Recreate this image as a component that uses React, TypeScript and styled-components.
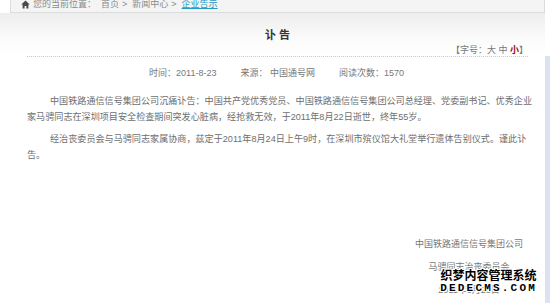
import styled, { createGlobalStyle } from 'styled-components';

const GlobalStyle = createGlobalStyle`
  html, body {
    margin: 0;
    padding: 0;
    background: #fff;
  }
  body {
    font-family: 'Liberation Sans', 'Noto Sans CJK SC', sans-serif;
  }
`;

const BODY_PARAGRAPHS = [
  [
    '中国铁路通信信号集团公司沉痛讣告：中国共产党优秀党员、中国铁路通信信号集团公司总经理、党委副书记、优秀企业',
    '家马骋同志在深圳项目安全检查期间突发心脏病，经抢救无效，于2011年8月22日逝世，终年55岁。',
  ],
  [
    '经治丧委员会与马骋同志家属协商，兹定于2011年8月24日上午9时，在深圳市殡仪馆大礼堂举行遗体告别仪式。谨此讣',
    '告。',
  ],
];

const SIGNATURE = ['中国铁路通信信号集团公司', '马骋同志治丧委员会', '2011年8月23日'];

const HomeIcon = () => (
  <svg width="9" height="9" viewBox="0 0 10 10">
    <path d="M5 0.5 L0.3 5 L1.8 5 L1.8 9.5 L4 9.5 L4 6.8 L6 6.8 L6 9.5 L8.2 9.5 L8.2 5 L9.7 5 Z" fill="#4a4a4a" />
  </svg>
);

const App = () => {
  return (
    <>
      <GlobalStyle />
      <Page>
        <Main>
          <Crumbs>
            <HomeIcon />
            <span>您的当前位置：</span>
            <CrumbLink>首页</CrumbLink>
            <Sep>&gt;</Sep>
            <CrumbLink>新闻中心</CrumbLink>
            <Sep>&gt;</Sep>
            <CrumbLink current>企业告示</CrumbLink>
          </Crumbs>

          <Header>
            <HeaderInner>
              <Title>讣 告</Title>
              <FontSize>
                【字号：大 中 <b>小</b>】
              </FontSize>
            </HeaderInner>
          </Header>

          <Meta>
            <span>时间：2011-8-23</span>
            <span>来源： 中国通号网</span>
            <span>阅读次数：1570</span>
          </Meta>

          <Article>
            {BODY_PARAGRAPHS.map((lines, i) => (
              <Para key={i}>
                {lines.map((line, j) => (
                  <Line key={j} first={j === 0}>
                    {line}
                  </Line>
                ))}
              </Para>
            ))}
          </Article>

          <Signature>
            {SIGNATURE.map((line) => (
              <div key={line}>{line}</div>
            ))}
          </Signature>

          <Watermark>
            <div className="cn">织梦内容管理系统</div>
            <div className="en">DEDECMS.COM</div>
          </Watermark>
        </Main>
        <Side />
      </Page>
    </>
  );
};

export default App;

const Page = styled.div`
  display: flex;
  width: 550px;
  height: 303px;
  overflow: hidden;
`;

const Main = styled.div`
  position: relative;
  width: 545px;
  flex-shrink: 0;
`;

const Side = styled.div`
  flex: 1;
  background: linear-gradient(to bottom, #fff 56px, #dbe3f3 56px);
`;

const Crumbs = styled.div`
  display: flex;
  align-items: center;
  gap: 3px;
  margin-left: 10px;
  height: 12px;
  padding-left: 10px;
  background: #f4f4f4;
  border: 1px solid #dcdcdc;
  border-top: none;
  font-size: 9px;
  line-height: 10px;
  color: #8a8a8a;
  overflow: hidden;
  svg {
    margin-top: -4px;
  }
  span {
    margin-top: -4px;
  }
`;

const CrumbLink = styled.span<{ current?: boolean }>`
  padding-left: 2px;
  color: ${(p) => (p.current ? '#2a9ac4' : '#8a8a8a')};
  text-decoration: ${(p) => (p.current ? 'underline' : 'none')};
`;

const Sep = styled.span`
  color: #8a8a8a;
`;

const Header = styled.div`
  padding: 0 17px 0 27px;
  background: linear-gradient(to bottom, #eeeeee 0%, #fbfbfb 60%, #ffffff 100%);
`;

const HeaderInner = styled.div`
  height: 43px;
  border-bottom: 1px dotted #c8c8c8;
`;

const Title = styled.div`
  padding-top: 16px;
  text-align: center;
  font-size: 11px;
  line-height: 12px;
  font-weight: bold;
  color: #333;
`;

const FontSize = styled.div`
  margin-top: 3px;
  text-align: right;
  font-size: 9px;
  line-height: 12px;
  color: #777;
  b {
    color: #9c0b0b;
  }
`;

const Meta = styled.div`
  display: flex;
  justify-content: center;
  gap: 24px;
  margin-top: 10px;
  padding-left: 8px;
  font-size: 9px;
  line-height: 12px;
  color: #777;
`;

const Article = styled.div`
  padding: 0 20px 0 27px;
  margin-top: 14px;
`;

const Para = styled.div`
  margin-bottom: 6px;
  font-size: 9.1px;
  line-height: 16px;
  color: #6e6e6e;
`;

const Line = styled.div<{ first?: boolean }>`
  white-space: nowrap;
  padding-left: ${(p) => (p.first ? '23px' : '0')};
`;

const Signature = styled.div`
  width: 120px;
  margin: 70px 16px 0 auto;
  text-align: center;
  font-size: 9px;
  line-height: 23px;
  color: #777;
`;

const Watermark = styled.div`
  position: absolute;
  right: 8px;
  bottom: 8px;
  text-align: center;
  color: #000;
  font-weight: bold;
  text-shadow: 1px 0 #fff, -1px 0 #fff, 0 1px #fff, 0 -1px #fff, 1px 1px #fff, -1px -1px #fff, 1px -1px #fff,
    -1px 1px #fff;
  .cn {
    font-family: 'Noto Sans CJK SC', sans-serif;
    font-size: 12px;
    line-height: 14px;
  }
  .en {
    font-family: 'Liberation Mono', monospace;
    font-size: 11px;
    line-height: 13px;
    letter-spacing: 2.2px;
  }
`;
